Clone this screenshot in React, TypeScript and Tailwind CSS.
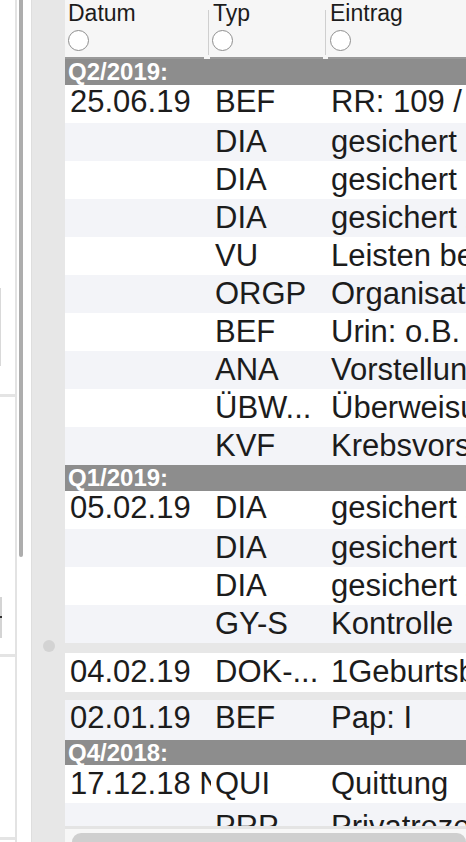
import React from "react"

interface Entry {
  date?: string
  typ: string
  text: string
  alt?: boolean
  box: string
  pad: string
}

const plain = "h-[38px]"
const padFirst = "pt-[1px] leading-[31px]"
const padRow = "pt-[3px] leading-[31px]"

const q2: Entry[] = [
  { date: "25.06.19", typ: "BEF", text: "RR: 109 / 70 mmHg", box: plain, pad: padFirst },
  { typ: "DIA", text: "gesichert Z01.4 G", alt: true, box: plain, pad: padRow },
  { typ: "DIA", text: "gesichert N95.1 G", box: plain, pad: padRow },
  { typ: "DIA", text: "gesichert Z12.4 G", alt: true, box: plain, pad: padRow },
  { typ: "VU", text: "Leisten beidseits frei", box: plain, pad: padRow },
  { typ: "ORGP", text: "Organisation", alt: true, box: plain, pad: padRow },
  { typ: "BEF", text: "Urin: o.B.", box: plain, pad: padRow },
  { typ: "ANA", text: "Vorstellung zur Kontrolle", alt: true, box: plain, pad: padRow },
  { typ: "ÜBW...", text: "Überweisung", box: plain, pad: padRow },
  { typ: "KVF", text: "Krebsvorsorge Frau", alt: true, box: plain, pad: padRow },
]

const q1: Entry[] = [
  { date: "05.02.19", typ: "DIA", text: "gesichert Z30.9 G", box: plain, pad: padFirst },
  { typ: "DIA", text: "gesichert N92.0 G", alt: true, box: plain, pad: padRow },
  { typ: "DIA", text: "gesichert Z01.4 G", box: plain, pad: padRow },
  { typ: "GY-S", text: "Kontrolle", alt: true, box: plain, pad: padRow },
]

function Row({ e }: { e: Entry }) {
  return (
    <div className={`flex shrink-0 text-[31px] text-[#1c1c1c] ${e.box} ${e.alt ? "bg-[#f3f4f8]" : "bg-white"}`}>
      <div className={`w-[146px] shrink-0 overflow-hidden whitespace-nowrap pl-[5px] ${e.pad}`}>{e.date}</div>
      <div className={`w-[116px] shrink-0 overflow-hidden whitespace-nowrap pl-[4px] ${e.pad}`}>{e.typ}</div>
      <div className={`min-w-0 flex-1 overflow-hidden whitespace-nowrap pl-[4px] ${e.pad}`}>{e.text}</div>
    </div>
  )
}

function Band({ label, h }: { label: string; h: string }) {
  return (
    <div className={`shrink-0 bg-[#8d8d8d] pl-[3px] text-[24px] font-bold text-white ${h}`}>{label}</div>
  )
}

function Radio() {
  return <div className="h-[21px] w-[21px] rounded-full border border-[#8e8e8e] bg-white"></div>
}

export default function App() {
  return (
    <div className="flex h-[842px] w-[466px] overflow-hidden bg-white font-['Liberation_Sans',Arial,sans-serif]">
      {/* cut-off sidebar on the left */}
      <div className="flex w-[15px] shrink-0 flex-col">
        <div className="h-[288px] shrink-0"></div>
        <div className="h-[78px] shrink-0 border-l border-[#d9d9d9]"></div>
        <div className="h-[28px] shrink-0"></div>
        <div className="h-[3px] shrink-0 bg-[#e4e4e4]"></div>
        <div className="h-[200px] shrink-0"></div>
        <div className="flex h-[41px] shrink-0 flex-col border-l-2 border-[#d4d4d4]">
          <div className="mt-[19px] h-[2px] w-[2px] -ml-[2px] bg-[#333]"></div>
        </div>
        <div className="h-[16px] shrink-0"></div>
        <div className="h-[3px] shrink-0 bg-[#e4e4e4]"></div>
        <div className="h-[180px] shrink-0"></div>
        <div className="h-[3px] shrink-0 bg-[#e4e4e4]"></div>
      </div>
      <div className="w-[2px] shrink-0 bg-[#e3e3e3]"></div>
      <div className="w-[14px] shrink-0 pl-[2px]">
        <div className="h-[557px] w-[4px] rounded-b-full bg-[#adadad]"></div>
      </div>

      {/* gray gutter */}
      <div className="flex w-[34px] shrink-0 flex-col items-center border-l border-[#dedede] bg-[#e7e7e7] pt-[640px]">
        <div className="h-[12px] w-[12px] rounded-full bg-[#d3d3d3]"></div>
      </div>

      {/* table */}
      <div className="flex min-w-0 flex-1 flex-col bg-[#e7e7e7]">
        <div className="flex h-[57px] shrink-0 bg-[#f6f6f6] text-[23px] leading-[23px] text-[#1c1c1c]">
          <div className="w-[143px] shrink-0 pl-[3px] pt-[2px]">
            <div>Datum</div>
            <div className="mt-[5px]">
              <Radio />
            </div>
          </div>
          <div className="mb-[2px] mt-[10px] w-px shrink-0 bg-[#cfcfcf]"></div>
          <div className="w-[116px] shrink-0 pl-[3px] pt-[2px]">
            <div className="pl-[1px]">Typ</div>
            <div className="mt-[5px]">
              <Radio />
            </div>
          </div>
          <div className="mb-[2px] mt-[10px] w-px shrink-0 bg-[#cfcfcf]"></div>
          <div className="flex-1 pl-[4px] pt-[2px]">
            <div>Eintrag</div>
            <div className="mt-[5px]">
              <Radio />
            </div>
          </div>
        </div>
        <div className="flex h-[2px] shrink-0 bg-[#f6f6f6]">
          <div className="w-[139px] bg-[#9a9a9a]"></div>
          <div className="w-[6px]"></div>
          <div className="w-[113px] bg-[#9a9a9a]"></div>
          <div className="w-[5px]"></div>
          <div className="flex-1 bg-[#9a9a9a]"></div>
        </div>

        <div className="flex min-h-0 flex-1 flex-col overflow-hidden">
          <Band label="Q2/2019:" h="h-[26px] leading-[26px]" />
          {q2.map((e, i) => (
            <Row key={"a" + i} e={e} />
          ))}
          <Band label="Q1/2019:" h="h-[26px] leading-[26px]" />
          {q1.map((e, i) => (
            <Row key={"b" + i} e={e} />
          ))}
          <div className="h-[10px] shrink-0"></div>
          <Row e={{ date: "04.02.19", typ: "DOK-...", text: "1Geburtsbescheinigung", box: "h-[39px]", pad: "pt-[3px] leading-[31px]" }} />
          <div className="h-[8px] shrink-0"></div>
          <Row e={{ date: "02.01.19", typ: "BEF", text: "Pap: I", alt: true, box: "h-[40px]", pad: "pt-[2px] leading-[31px]" }} />
          <Band label="Q4/2018:" h="h-[25px] leading-[25px]" />
          <Row e={{ date: "17.12.18 NN", typ: "QUI", text: "Quittung", box: plain, pad: "pt-[3px] leading-[31px]" }} />
          <Row e={{ typ: "PRP", text: "Privatrezept", alt: true, box: plain, pad: "pt-[8px] leading-[31px]" }} />
        </div>

        <div className="h-[3px] shrink-0 bg-[#e4e4e4]"></div>
        <div className="h-[13px] shrink-0 overflow-hidden bg-[#f7f7f7] pl-[7px] pt-[4px]">
          <div className="h-[18px] rounded-[9px] bg-[#cfcfcf]"></div>
        </div>
      </div>
    </div>
  )
}
